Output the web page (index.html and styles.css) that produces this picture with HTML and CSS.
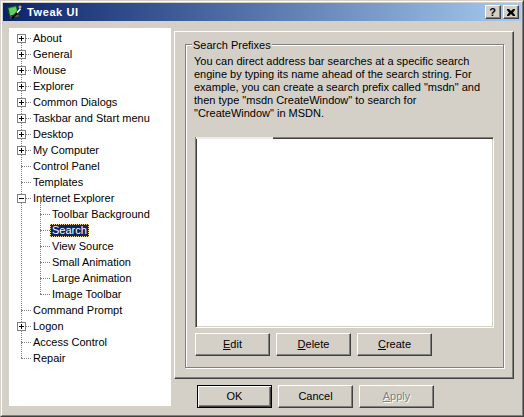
FILE: index.html
```html
<!DOCTYPE html>
<html>
<head>
<meta charset="utf-8">
<title>Tweak UI</title>
<link rel="stylesheet" href="styles.css">
</head>
<body>
<div class="window">
  <div class="frame">
    <div class="titlebar">
      <svg class="app-icon" width="16" height="16" viewBox="0 0 16 16">
        <polygon points="1.5,3.5 10.5,1.5 12.5,10.5 3.5,12.5" fill="#2f9a3a" stroke="#143c18" stroke-width="1"/>
        <polygon points="3,4.5 9.8,3 11.3,9.7 4.4,11.3" fill="#5fd06a"/>
        <polygon points="3.5,12.5 12.5,10.5 13.5,12.5 4.5,14.5" fill="#6a6a6a" stroke="#222" stroke-width="0.6"/>
        <line x1="6" y1="14.5" x2="12.5" y2="7" stroke="#000" stroke-width="2"/>
        <line x1="11" y1="8.7" x2="14.5" y2="4.7" stroke="#fff" stroke-width="1.6"/>
        <path d="M14 1.5v3M12.5 3h3" stroke="#ffe040" stroke-width="1"/>
      </svg>
      <span class="title">Tweak UI</span>
      <div class="caption-buttons">
        <span class="cap-btn help">?</span>
        <span class="cap-btn close">
          <svg width="8" height="7" viewBox="0 0 8 7"><path d="M0 0h2l2 2 2-2h2v1L6 3.5 8 6v1H6L4 5 2 7H0V6l2-2.5L0 1z" fill="#000"/></svg>
        </span>
      </div>
    </div>
    <div class="client">
      <div class="tree">
        <ul class="nodes root">
          <li><div class="row"><span class="exp"><svg width="9" height="9" viewBox="0 0 9 9"><rect x="0.5" y="0.5" width="8" height="8" fill="#fff" stroke="#808080"/><path d="M2 4.5h5M4.5 2v5" stroke="#000"/></svg></span><span class="label">About</span></div></li>
          <li><div class="row"><span class="exp"><svg width="9" height="9" viewBox="0 0 9 9"><rect x="0.5" y="0.5" width="8" height="8" fill="#fff" stroke="#808080"/><path d="M2 4.5h5M4.5 2v5" stroke="#000"/></svg></span><span class="label">General</span></div></li>
          <li><div class="row"><span class="exp"><svg width="9" height="9" viewBox="0 0 9 9"><rect x="0.5" y="0.5" width="8" height="8" fill="#fff" stroke="#808080"/><path d="M2 4.5h5M4.5 2v5" stroke="#000"/></svg></span><span class="label">Mouse</span></div></li>
          <li><div class="row"><span class="exp"><svg width="9" height="9" viewBox="0 0 9 9"><rect x="0.5" y="0.5" width="8" height="8" fill="#fff" stroke="#808080"/><path d="M2 4.5h5M4.5 2v5" stroke="#000"/></svg></span><span class="label">Explorer</span></div></li>
          <li><div class="row"><span class="exp"><svg width="9" height="9" viewBox="0 0 9 9"><rect x="0.5" y="0.5" width="8" height="8" fill="#fff" stroke="#808080"/><path d="M2 4.5h5M4.5 2v5" stroke="#000"/></svg></span><span class="label">Common Dialogs</span></div></li>
          <li><div class="row"><span class="exp"><svg width="9" height="9" viewBox="0 0 9 9"><rect x="0.5" y="0.5" width="8" height="8" fill="#fff" stroke="#808080"/><path d="M2 4.5h5M4.5 2v5" stroke="#000"/></svg></span><span class="label">Taskbar and Start menu</span></div></li>
          <li><div class="row"><span class="exp"><svg width="9" height="9" viewBox="0 0 9 9"><rect x="0.5" y="0.5" width="8" height="8" fill="#fff" stroke="#808080"/><path d="M2 4.5h5M4.5 2v5" stroke="#000"/></svg></span><span class="label">Desktop</span></div></li>
          <li><div class="row"><span class="exp"><svg width="9" height="9" viewBox="0 0 9 9"><rect x="0.5" y="0.5" width="8" height="8" fill="#fff" stroke="#808080"/><path d="M2 4.5h5M4.5 2v5" stroke="#000"/></svg></span><span class="label">My Computer</span></div></li>
          <li><div class="row"><span class="exp"></span><span class="label">Control Panel</span></div></li>
          <li><div class="row"><span class="exp"></span><span class="label">Templates</span></div></li>
          <li>
            <div class="row"><span class="exp"><svg width="9" height="9" viewBox="0 0 9 9"><rect x="0.5" y="0.5" width="8" height="8" fill="#fff" stroke="#808080"/><path d="M2 4.5h5" stroke="#000"/></svg></span><span class="label">Internet Explorer</span></div>
            <ul class="nodes children">
              <li><div class="row"><span class="exp"></span><span class="label">Toolbar Background</span></div></li>
              <li><div class="row"><span class="exp"></span><span class="label selected">Search</span></div></li>
              <li><div class="row"><span class="exp"></span><span class="label">View Source</span></div></li>
              <li><div class="row"><span class="exp"></span><span class="label">Small Animation</span></div></li>
              <li><div class="row"><span class="exp"></span><span class="label">Large Animation</span></div></li>
              <li><div class="row"><span class="exp"></span><span class="label">Image Toolbar</span></div></li>
            </ul>
          </li>
          <li><div class="row"><span class="exp"></span><span class="label">Command Prompt</span></div></li>
          <li><div class="row"><span class="exp"><svg width="9" height="9" viewBox="0 0 9 9"><rect x="0.5" y="0.5" width="8" height="8" fill="#fff" stroke="#808080"/><path d="M2 4.5h5M4.5 2v5" stroke="#000"/></svg></span><span class="label">Logon</span></div></li>
          <li><div class="row"><span class="exp"></span><span class="label">Access Control</span></div></li>
          <li><div class="row"><span class="exp"></span><span class="label">Repair</span></div></li>
        </ul>
      </div>
      <div class="main">
        <div class="page">
          <div class="group">
            <div class="group-label">Search Prefixes</div>
            <p class="desc">You can direct address bar searches at a specific search engine by typing its name ahead of the search string. For example, you can create a search prefix called "msdn" and then type "msdn CreateWindow" to search for "CreateWindow" in MSDN.</p>
            <div class="listbox"></div>
            <div class="button-row group-buttons">
              <span class="btn"><u>E</u>dit</span>
              <span class="btn"><u>D</u>elete</span>
              <span class="btn"><u>C</u>reate</span>
            </div>
          </div>
        </div>
        <div class="button-row dialog-buttons">
          <span class="btn default">OK</span>
          <span class="btn">Cancel</span>
          <span class="btn disabled"><u>A</u>pply</span>
        </div>
      </div>
    </div>
  </div>
</div>
</body>
</html>
```

FILE: styles.css
```css
html, body {
  margin: 0;
  padding: 0;
  background: #d4d0c8;
}

body {
  font-family: "Liberation Sans", Arial, sans-serif;
  font-size: 11px;
  color: #000;
}

.window {
  width: 524px;
  height: 417px;
  box-sizing: border-box;
  border: 1px solid;
  border-color: #d4d0c8 #404040 #404040 #d4d0c8;
  background: #d4d0c8;
}

.frame {
  height: 100%;
  box-sizing: border-box;
  border: 1px solid;
  border-color: #fff #808080 #808080 #fff;
  padding: 1px;
  display: flex;
  flex-direction: column;
}

/* ---------- title bar ---------- */
.titlebar {
  height: 18px;
  flex: none;
  display: flex;
  align-items: center;
  background: linear-gradient(to right, #0a246a, #a6caf0);
  padding-left: 3px;
  padding-right: 2px;
}

.app-icon {
  flex: none;
  margin-right: 5px;
}

.title {
  color: #fff;
  font-weight: bold;
  font-size: 11px;
  letter-spacing: 0.6px;
  flex: 1;
}

.caption-buttons {
  display: flex;
  gap: 2px;
}

.cap-btn {
  width: 16px;
  height: 14px;
  box-sizing: border-box;
  border: 1px solid;
  border-color: #fff #404040 #404040 #fff;
  box-shadow: inset -1px -1px #808080;
  background: #d4d0c8;
  display: flex;
  align-items: center;
  justify-content: center;
}

.cap-btn.help {
  font-weight: bold;
  font-size: 11px;
  line-height: 12px;
  padding-right: 1px;
}

.cap-btn.close svg {
  display: block;
  margin-right: 1px;
}

/* ---------- client ---------- */
.client {
  flex: 1;
  display: flex;
  align-items: flex-start;
}

.tree {
  width: 162px;
  height: 378px;
  margin: 7px 0 0 6px;
  padding-top: 2px;
  box-sizing: border-box;
  background: #fff;
  flex: none;
}

.nodes {
  list-style: none;
  margin: 0;
  padding: 0;
  position: relative;
}

.nodes::before {
  content: "";
  position: absolute;
  top: 8px;
  bottom: 8px;
  border-left: 1px dotted #808080;
}

.root::before {
  left: 12px;
}

.children::before {
  left: 31px;
  top: -4px;
}

.row {
  position: relative;
  display: flex;
  align-items: flex-start;
  height: 16px;
}

.row::before {
  content: "";
  position: absolute;
  top: 8px;
  width: 10px;
  border-top: 1px dotted #808080;
}

.root > li > .row {
  padding-left: 8px;
}

.root > li > .row::before {
  left: 12px;
}

.children .row {
  padding-left: 27px;
}

.children .row::before {
  left: 31px;
}

.exp {
  flex: none;
  width: 9px;
  height: 9px;
  margin-top: 4px;
  margin-right: 5px;
  position: relative;
  z-index: 1;
}

.exp svg {
  display: block;
}

.label {
  margin-top: 2px;
  height: 13px;
  line-height: 13px;
  padding: 0 2px;
  white-space: nowrap;
}

.label.selected {
  background: #0a246a;
  color: #fff;
  outline: 1px dotted #f5db95;
  outline-offset: -1px;
}

/* ---------- main page ---------- */
.main {
  margin: 10px 0 0 3px;
  display: flex;
  flex-direction: column;
}

.page {
  width: 340px;
  height: 348px;
  box-sizing: border-box;
  border: 1px solid;
  border-color: #fff #404040 #404040 #fff;
  box-shadow: inset -1px -1px #808080;
  padding: 12px 0 0 10px;
}

.group {
  width: 319px;
  height: 324px;
  box-sizing: border-box;
  border: 1px solid #808080;
  box-shadow: inset 1px 1px #fff, 1px 1px #fff;
  padding: 0 9px 0 8px;
}

.group-label {
  width: fit-content;
  margin: -6px 0 0 -2px;
  padding: 0 1px;
  height: 13px;
  line-height: 13px;
  background: #d4d0c8;
}

.desc {
  margin: 3px 0 0 0;
  line-height: 13px;
}

.listbox {
  position: relative;
  margin: 17px 0 0 1px;
  width: 299px;
  height: 191px;
  box-sizing: border-box;
  background: #fff;
  border: 1px solid;
  border-color: #808080 #fff #fff #808080;
  box-shadow: inset 1px 1px #404040, inset -1px -1px #d4d0c8;
}

.listbox::before {
  content: "";
  position: absolute;
  top: -1px;
  left: 0;
  width: 77px;
  height: 2px;
  background: #ececec;
}

.button-row {
  display: flex;
  gap: 6px;
}

.group-buttons {
  margin: 5px 0 0 1px;
}

.dialog-buttons {
  margin: 6px 0 0 23px;
}

.btn {
  width: 75px;
  height: 23px;
  box-sizing: border-box;
  border: 1px solid;
  border-color: #fff #404040 #404040 #fff;
  box-shadow: inset -1px -1px #808080;
  background: #d4d0c8;
  text-align: center;
  line-height: 21px;
}

.btn.default {
  border: 1px solid #000;
  box-shadow: inset 1px 1px #fff, inset -1px -1px #404040, inset -2px -2px #808080;
}

.btn.disabled {
  color: #808080;
  text-shadow: 1px 1px #fff;
}
```
